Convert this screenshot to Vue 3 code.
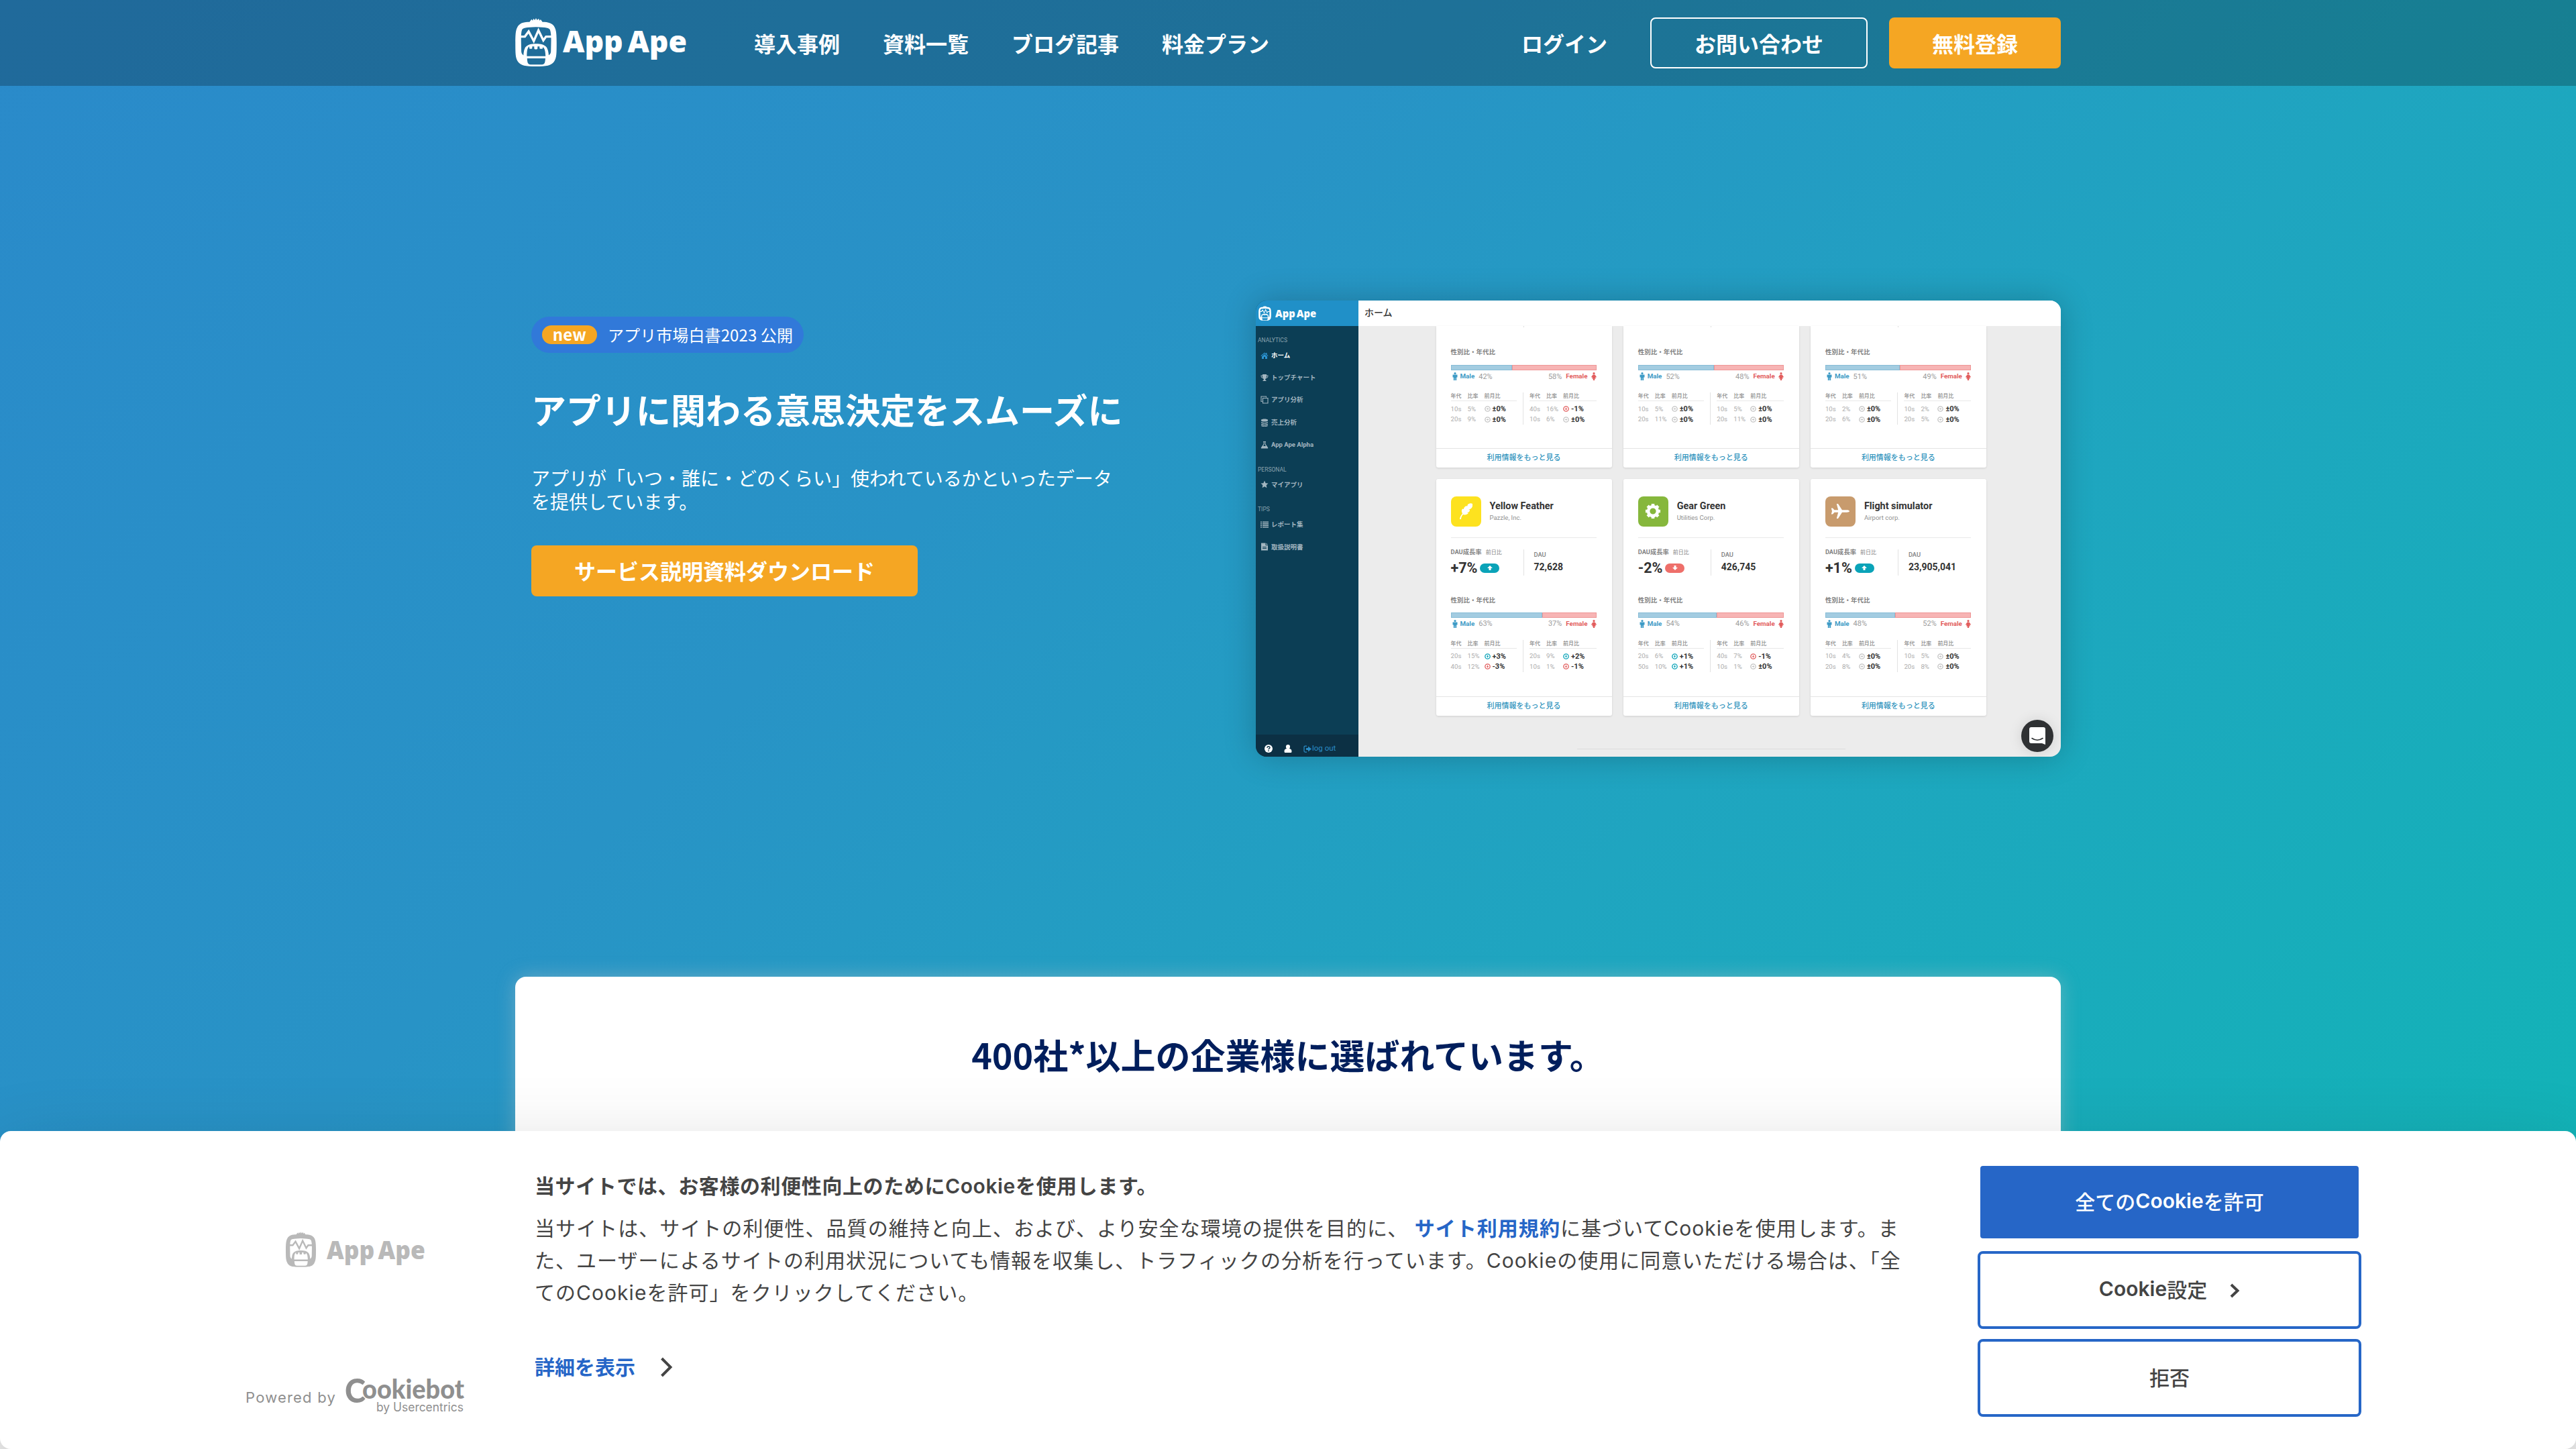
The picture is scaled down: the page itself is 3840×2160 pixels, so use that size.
<script setup>
const nav = ['導入事例', '資料一覧', 'ブログ記事', '料金プラン']

const menu = [
  {
    label: 'ANALYTICS',
    items: [
      { icon: 'home', text: 'ホーム', active: true },
      { icon: 'trophy', text: 'トップチャート' },
      { icon: 'copy', text: 'アプリ分析' },
      { icon: 'database', text: '売上分析' },
      { icon: 'flask', text: 'App Ape Alpha' },
    ],
  },
  { label: 'PERSONAL', items: [{ icon: 'star', text: 'マイアプリ' }] },
  {
    label: 'TIPS',
    items: [
      { icon: 'list', text: 'レポート集' },
      { icon: 'file', text: '取扱説明書' },
    ],
  },
]

const rows = [
  [
    { male: 42, ages: [[['10s', 5, 0], ['20s', 9, 0]], [['40s', 16, -1], ['10s', 6, 0]]] },
    { male: 52, ages: [[['10s', 5, 0], ['20s', 11, 0]], [['10s', 5, 0], ['20s', 11, 0]]] },
    { male: 51, ages: [[['10s', 2, 0], ['20s', 6, 0]], [['10s', 2, 0], ['20s', 5, 0]]] },
  ],
  [
    {
      app: { name: 'Yellow Feather', corp: 'Pazzle, Inc.', icon: 'feather', growth: 7, dau: '72,628' },
      male: 63,
      ages: [[['20s', 15, 3], ['40s', 12, -3]], [['20s', 9, 2], ['10s', 1, -1]]],
    },
    {
      app: { name: 'Gear Green', corp: 'Utilities Corp.', icon: 'gear', growth: -2, dau: '426,745' },
      male: 54,
      ages: [[['20s', 6, 1], ['50s', 10, 1]], [['40s', 7, -1], ['10s', 1, 0]]],
    },
    {
      app: { name: 'Flight simulator', corp: 'Airport corp.', icon: 'plane', growth: 1, dau: '23,905,041' },
      male: 48,
      ages: [[['10s', 4, 0], ['20s', 8, 0]], [['10s', 5, 0], ['20s', 8, 0]]],
    },
  ],
]

const signed = (n) => (n > 0 ? `+${n}%` : n < 0 ? `${n}%` : '±0%')
const trend = (n) => (n > 0 ? 'up' : n < 0 ? 'down' : 'flat')
</script>

<template>
  <div class="page">
    <svg class="defs" width="0" height="0" aria-hidden="true">
      <defs>
        <mask id="ape-mask" maskUnits="userSpaceOnUse" x="50" y="46" width="194" height="225">
          <path fill="#fff" d="M54 160C54 108 58 84 84 72C96 67 108 67 118 67L127 55L132 61L136 52L142 59L147 50L152 59L159 52L163 61L168 56L176 67C188 67 200 68 212 73C236 84 240 108 240 160C240 206 240 228 228 246C214 264 196 267 147 267C98 267 80 264 66 246C54 228 54 206 54 160Z" />
          <path fill="#000" d="M80 150C80 130 80 114 84 103C88 94 100 92 147 90C194 92 206 94 210 103C214 114 215 130 215 150L214 200C213 212 207 215 198 221H97C88 215 82 212 81 200Z" />
          <path fill="none" stroke="#fff" stroke-width="10" d="M76 133H97L114 110L137 153L158 105L180 150L192 133H218" />
          <path fill="#fff" d="M90 232C91 206 92 192 100 180C109 169 126 165 147 165C168 165 185 169 194 180C202 192 204 206 205 232L196 262H99Z" />
          <path fill="#000" d="M106 221C106 200 107 184 117 177V184Q117 188 121 188H126Q130 188 130 184V177H139V186Q139 190 143 190H150Q154 190 154 186V177H163V184Q163 188 167 188H174Q178 188 178 180C187 186 189 200 190 221Z" />
          <path fill="#000" d="M107 231H189C188 250 186 258 174 259H122C110 258 108 250 107 231Z" />
        </mask>
        <symbol id="ape" viewBox="54 50 186 217">
          <rect x="54" y="50" width="186" height="217" fill="currentColor" mask="url(#ape-mask)" />
        </symbol>
      </defs>
    </svg>

    <header class="header">
      <div class="container header-inner">
        <div class="brand">
          <svg class="brand-icon" width="62" height="72"><use href="#ape" /></svg>
          <svg class="brand-text" width="190" height="64" viewBox="0 0 190 64">
            <text x="0" y="43" font-size="45" textLength="185" lengthAdjust="spacingAndGlyphs" word-spacing="-5">App Ape</text>
          </svg>
        </div>
        <nav class="nav">
          <a v-for="n in nav" :key="n">{{ n }}</a>
        </nav>
        <div class="actions">
          <a>ログイン</a>
          <a class="btn outline">お問い合わせ</a>
          <a class="btn solid">無料登録</a>
        </div>
      </div>
    </header>

    <main>
      <section class="container hero">
        <div class="copy">
          <div class="news"><b>new</b><span>アプリ市場白書2023 公開</span></div>
          <h1>アプリに関わる意思決定をスムーズに</h1>
          <p>アプリが「いつ・誰に・どのくらい」使われているかといったデータ<br />を提供しています。</p>
          <a class="btn solid">サービス説明資料ダウンロード</a>
        </div>

        <div class="mock">
          <aside class="side">
            <div class="side-brand">
              <svg width="19" height="22"><use href="#ape" /></svg>
              <svg width="64" height="28" viewBox="0 0 64 28">
                <text x="0" y="19.500" font-size="16.5" textLength="61" lengthAdjust="spacingAndGlyphs" word-spacing="-2">App Ape</text>
              </svg>
            </div>
            <div v-for="g in menu" :key="g.label" class="group">
              <div class="group-label">{{ g.label }}</div>
              <div v-for="i in g.items" :key="i.text" class="item" :class="{ active: i.active }">
                <svg width="12" height="12" viewBox="0 0 24 24" fill="currentColor">
                  <path v-if="i.icon === 'home'" d="M12 3 1 12.5l1.500 1.700L12 6l9.500 8.200 1.500-1.700L19 9V4h-3v2.500zM12 8l-8 7v7h6v-6h4v6h6v-7z" />
                  <path v-else-if="i.icon === 'trophy'" d="M6 2h12v3h5c0 6-2 8-6.500 9-1 1.500-2.500 2-2.500 4 0 1 3.500 1.500 3.500 4h-11c0-2.500 3.500-3 3.500-4 0-2-1.500-2.500-2.500-4C3 13 1 11 1 5h5zM3 7c.3 3 1.500 4.500 3.800 5C6.200 10 6 9 6 7zm18 0h-3c0 2-.2 3-.8 5C19.500 11.500 20.700 10 21 7z" />
                  <path v-else-if="i.icon === 'copy'" fill="none" stroke="currentColor" stroke-width="2.200" d="M7 7h15v15H7zM5 17H2V2h15v3" />
                  <path v-else-if="i.icon === 'database'" d="M2 4c0-4 20-4 20 0v2c0 4-20 4-20 0zm0 6c4 3 16 3 20 0v2c0 4-20 4-20 0zm0 5.500c4 3 16 3 20 0v2c0 4-20 4-20 0zM2 20c4 3 16 3 20 0v1c0 4-20 4-20 0z" />
                  <path v-else-if="i.icon === 'flask'" d="M8 2h8v2h-1v6l7 10c1 2 0 3-1 3H3c-1 0-2-1-1-3l7-10V4H8zm3 2v7l-3 5h8l-3-5V4z" />
                  <path v-else-if="i.icon === 'star'" d="m12 1 3.300 7.300 7.700.9-5.700 5.400 1.500 8L12 18.700 5.200 22.600l1.500-8L1 9.200l7.700-.9z" />
                  <path v-else-if="i.icon === 'list'" d="M0 3h4v3H0zm6 0h18v3H6zM0 8h4v3H0zm6 0h18v3H6zm-6 5h4v3H0zm6 0h18v3H6zm-6 5h4v3H0zm6 0h18v3H6z" />
                  <path v-else fill-rule="evenodd" d="M2 1h13v7h7v15H2zm15 0 5 5h-5zM6 12v2h12v-2zm0 4v2h12v-2z" />
                </svg>
                <span>{{ i.text }}</span>
              </div>
            </div>
            <div class="side-foot">
              <svg width="12" height="12" viewBox="0 0 24 24">
                <circle cx="12" cy="12" r="12" fill="#fff" />
                <path d="M8 9.500c0-5 8-5 8-.5 0 3-4 2.800-4 5.500M12 17v3" fill="none" stroke="#0c3044" stroke-width="3" />
              </svg>
              <svg width="12" height="12" viewBox="0 0 24 24" fill="#fff">
                <path d="M12 0c8 0 7 9 4 12 5 1 7 3 7 8 0 3-1 4-3 4H4c-2 0-3-1-3-4 0-5 2-7 7-8C5 9 4 0 12 0z" />
              </svg>
              <span class="logout">
                <svg width="12" height="11" viewBox="0 0 24 22">
                  <path d="M10 2H5Q2 2 2 5v12q0 3 3 3h5" fill="none" stroke="currentColor" stroke-width="2.500" />
                  <path d="M8 8h6V3l10 8-10 8v-5H8z" fill="currentColor" />
                </svg>log out
              </span>
            </div>
          </aside>

          <div class="board">
            <div class="board-head">ホーム</div>
            <div class="board-body">
              <div v-for="(row, r) in rows" :key="r" class="cards">
                <article v-for="(c, k) in row" :key="k" class="card" :class="{ cut: !c.app }">
                  <template v-if="c.app">
                    <div class="card-head">
                      <div class="tile" :class="c.app.icon">
                        <svg v-if="c.app.icon === 'feather'" width="28" height="28" viewBox="0 0 28 28">
                          <path fill="#fff" d="M24 3c-3-2-6 0-7 1l-1 3-1-1c-3 1-4 3-4 5l-2-.5c-2 3-1 5 0 7C7 20 5 23 5 26h2c0-3 1-5 3-7 3 1 6 0 8-2l-2-1c3 0 4-2 4-4h-2c3-1 6-3 6-6z" />
                        </svg>
                        <svg v-else-if="c.app.icon === 'gear'" width="24" height="24" viewBox="0 0 26 26">
                          <path fill="none" stroke="#fff" stroke-width="5" d="M13 5.500a7.500 7.500 0 1 0 0 15 7.500 7.500 0 1 0 0-15z" />
                          <path fill="none" stroke="#fff" stroke-width="5" d="M13 1v3M13 22v3M1 13h3M22 13h3M4.500 4.500l2.200 2.200M19.300 19.300l2.200 2.200M4.500 21.500l2.200-2.200M19.300 6.700l2.200-2.200" />
                        </svg>
                        <svg v-else width="28" height="26" viewBox="0 0 28 26">
                          <path fill="#fff" d="M28 13c0 1.200-2 1.700-4 1.700h-7L11 24H8.800l2.400-9.300H5.500L3 17.500H.8L2 13 .8 8.500H3l2.500 2.800h5.700L8.800 2H11l6 9.300h7c2 0 4 .5 4 1.700z" />
                        </svg>
                      </div>
                      <div class="app-text">
                        <div class="app-name">{{ c.app.name }}</div>
                        <div class="app-corp">{{ c.app.corp }}</div>
                      </div>
                    </div>
                    <div class="stats">
                      <div class="growth">
                        <div class="stat-label">DAU成長率<small>前日比</small></div>
                        <div class="growth-value">
                          {{ signed(c.app.growth) }}
                          <i :class="trend(c.app.growth)">
                            <svg width="8" height="7" viewBox="0 0 9 8"><path fill="#fff" d="M4.500 0 9 4.500H6.200V8H2.800V4.500H0z" /></svg>
                          </i>
                        </div>
                      </div>
                      <div class="dau">
                        <div class="stat-label">DAU</div>
                        <div class="dau-value">{{ c.app.dau }}</div>
                      </div>
                    </div>
                  </template>
                  <div v-else class="stub"></div>

                  <div class="ratio-title">性別比・年代比</div>
                  <div class="bar">
                    <div class="bar-m" :style="{ width: c.male + '%' }"></div>
                    <div class="bar-f"></div>
                  </div>
                  <div class="sexes">
                    <svg class="m" width="8" height="12" viewBox="0 0 8 12" fill="currentColor"><circle cx="4" cy="1.600" r="1.600" /><path d="M.5 3.500h7v4H6.200V12H4.300V8.500h-.6V12H1.800V7.500H.5z" /></svg>
                    <b class="m">Male</b><span>{{ c.male }}%</span>
                    <span class="push">{{ 100 - c.male }}%</span><b class="f">Female</b>
                    <svg class="f" width="8" height="12" viewBox="0 0 8 12" fill="currentColor"><circle cx="4" cy="1.600" r="1.600" /><path d="M2.500 3.500h3L8 7 7 7.800 6 7l.8 2.500H5.200V12H2.800V9.500H1.200L2 7l-1 .8L0 7z" /></svg>
                  </div>
                  <div class="ages">
                    <div v-for="(t, ti) in c.ages" :key="ti" class="age">
                      <div class="age-row age-head"><span>年代</span><span>比率</span><span>前月比</span></div>
                      <div v-for="(a, ai) in t" :key="ai" class="age-row">
                        <span>{{ a[0] }}</span><span>{{ a[1] }}%</span>
                        <span class="delta">
                          <svg :class="trend(a[2])" width="9" height="9" viewBox="0 0 9 9">
                            <circle cx="4.500" cy="4.500" r="3.700" fill="none" stroke="currentColor" stroke-width="1.300" />
                            <path v-if="a[2] > 0" d="M4.500 2.500 6.300 4.700H5V6.300H4V4.700H2.700z" fill="currentColor" />
                            <path v-else-if="a[2] < 0" d="M4.500 6.500 6.300 4.300H5V2.700H4V4.300H2.700z" fill="currentColor" />
                            <path v-else d="M6.500 4.500 4.300 6.300V5H2.700V4h1.600V2.700z" fill="currentColor" />
                          </svg>
                          <b>{{ signed(a[2]) }}</b>
                        </span>
                      </div>
                    </div>
                  </div>
                  <div class="more">利用情報をもっと見る</div>
                </article>
              </div>
              <div class="rule"></div>
            </div>
            <div class="chat">
              <svg width="24" height="26" viewBox="0 0 24 26">
                <path fill="#fff" d="M3 0h18q3 0 3 3v23l-5-2H3q-3 0-3-3V3q0-3 3-3z" />
                <path d="M4 16.500q8 5.500 16 0" fill="none" stroke="#2f3133" stroke-width="1.600" stroke-linecap="round" />
              </svg>
            </div>
          </div>
        </div>
      </section>

      <section class="container clients">
        <h2>400社*以上の企業様に選ばれています。</h2>
      </section>
    </main>

    <div class="consent">
      <div class="consent-brand">
        <div class="consent-logo">
          <svg width="45" height="53"><use href="#ape" /></svg>
          <svg width="150" height="56" viewBox="0 0 150 56">
            <text x="0" y="42" font-size="36.500" textLength="147" lengthAdjust="spacingAndGlyphs" word-spacing="-4">App Ape</text>
          </svg>
        </div>
        <div class="powered">
          <span>Powered by</span>
          <svg width="178" height="56" viewBox="0 0 178 56">
            <text class="cb" x="-2" y="36" font-size="49" textLength="31" lengthAdjust="spacingAndGlyphs">C</text>
            <text class="cb" x="24" y="30" font-size="40" textLength="152" lengthAdjust="spacingAndGlyphs">ookiebot</text>
            <text class="by" x="45" y="49" font-size="18" textLength="130" lengthAdjust="spacingAndGlyphs">by Usercentrics</text>
          </svg>
        </div>
      </div>
      <div class="consent-text">
        <h3>当サイトでは、お客様の利便性向上のために<b>Cookie</b>を使用します。</h3>
        <p>
          当サイトは、サイトの利便性、品質の維持と向上、および、より安全な環境の提供を目的に、 <a>サイト利用規約</a>に基づいてCookieを使用します。ま<br />た、ユーザーによるサイトの利用状況についても情報を収集し、トラフィックの分析を行っています。Cookieの使用に同意いただける場合は、「全<br />てのCookieを許可」をクリックしてください。
        </p>
        <div class="details">
          <a>詳細を表示</a>
          <svg width="20" height="30" viewBox="0 0 20 30"><path d="M2.500 2 15.500 15 2.500 28" fill="none" stroke="#444" stroke-width="4" /></svg>
        </div>
      </div>
      <div class="consent-actions">
        <button class="primary">全ての<b>Cookie</b>を許可</button>
        <button><b>Cookie</b>設定
          <svg width="15" height="22" viewBox="0 0 15 22"><path d="M2 2 11.500 11 2 20" fill="none" stroke="#444" stroke-width="4" /></svg>
        </button>
        <button>拒否</button>
      </div>
    </div>
  </div>
</template>

<style>
html,
body {
  margin: 0;
  overflow: hidden;
}
</style>

<style scoped>
.page {
  position: relative;
  width: 3840px;
  height: 2160px;
  overflow: hidden;
  background: linear-gradient(135deg, #2a8aca 0%, #2893c6 36%, #1fa5c0 62%, #11b5b6 98%) 0 0 / 100% 2110px no-repeat #fff;
  font-family: "Noto Sans CJK JP", sans-serif;
  color: #fff;
}
.page * {
  box-sizing: border-box;
}
.defs {
  position: absolute;
}
.container {
  width: 2304px;
  margin: 0 auto;
}

/* header */
.header {
  height: 128px;
  background: rgba(0, 0, 0, 0.23);
}
.header-inner {
  height: 128px;
  display: flex;
  align-items: center;
  font-size: 32px;
  font-weight: 700;
}
.brand {
  width: 356px;
  display: flex;
  align-items: center;
  gap: 9px;
}
.brand-icon {
  margin-top: -3px;
}
.brand-text {
  margin-top: 5px;
}
.brand-text,
.side-brand svg,
.consent-logo svg {
  overflow: visible;
}
.brand text,
.side-brand text,
.consent-logo text {
  font-family: "Noto Sans", sans-serif;
  font-weight: 900;
  fill: currentColor;
}
.nav {
  display: flex;
  gap: 64px;
}
.actions {
  margin-left: auto;
  display: flex;
  align-items: center;
}
.actions > a:first-child {
  margin-right: 64px;
}
.actions .outline {
  margin-right: 32px;
}
.btn {
  display: inline-flex;
  align-items: center;
  justify-content: center;
  height: 76px;
  padding: 0 64px;
  border-radius: 8px;
  font-size: 32px;
  font-weight: 700;
  line-height: 1;
}
.btn.outline {
  border: 2px solid #fff;
}
.btn.solid {
  background: #f5a623;
}
.copy .btn {
  padding-bottom: 2px;
}

/* hero */
.hero {
  display: flex;
  justify-content: space-between;
  height: 1328px;
  padding-top: 320px;
}
.copy {
  width: 900px;
  padding: 24px 0 0 24px;
}
.news {
  display: flex;
  align-items: center;
  width: 406px;
  height: 54px;
  padding: 0 16px;
  border-radius: 27px;
  background: #3179d9;
  font-size: 24px;
  line-height: 1;
  letter-spacing: 0.1px;
  white-space: nowrap;
}
.news b {
  display: flex;
  align-items: center;
  justify-content: center;
  width: 82px;
  height: 28px;
  padding-bottom: 3px;
  margin-right: 16px;
  border-radius: 14px;
  background: #f5a623;
}
h1 {
  margin: 48px 0 0;
  font-size: 52px;
  line-height: 72px;
  font-weight: 700;
  white-space: nowrap;
}
.copy p {
  margin: 49px 0 48px;
  font-size: 28px;
  line-height: 35px;
  white-space: nowrap;
}

/* dashboard */
.mock {
  display: flex;
  width: 1200px;
  height: 680px;
  border-radius: 16px;
  overflow: hidden;
  box-shadow: 0 0 48px rgba(0, 0, 0, 0.22);
  font-family: Roboto, "Noto Sans CJK JP", sans-serif;
  color: #333;
  line-height: 1;
  white-space: nowrap;
}
.side {
  display: flex;
  flex-direction: column;
  width: 153px;
  background: #0c3e55;
  color: #a3b6c0;
}
.side-brand {
  display: flex;
  align-items: center;
  gap: 6px;
  height: 38px;
  padding-left: 4px;
  margin-bottom: 15px;
  background: #2090c8;
  color: #fff;
}
.group {
  margin-bottom: 14.300px;
}
.group-label {
  height: 12px;
  padding-left: 3px;
  font-size: 8.500px;
  line-height: 12px;
  color: #8ba3b0;
}
.item {
  display: flex;
  align-items: center;
  gap: 4px;
  height: 33.300px;
  padding-left: 7px;
  font-size: 9.500px;
  font-weight: 700;
}
.active {
  color: #fff;
}
.active svg {
  color: #2b93d1;
}
.side-foot {
  display: flex;
  align-items: center;
  height: 33px;
  margin-top: auto;
  padding: 9px 0 0 13px;
  gap: 17px;
  background: #0c3044;
}
.logout {
  display: flex;
  align-items: center;
  gap: 1px;
  color: #2a8cc6;
  font-size: 11.500px;
}
.board {
  position: relative;
  flex: 1;
  background: #ececec;
}
.board-head {
  height: 38px;
  padding-left: 9px;
  background: #fff;
  font-size: 14px;
  line-height: 37px;
  font-weight: 500;
}
.board-body {
  padding-left: 115.500px;
}
.cards {
  display: flex;
  gap: 17.200px;
  margin-bottom: 17px;
}
.card {
  display: flex;
  flex-direction: column;
  width: 262px;
  height: 353px;
  border-radius: 3px;
  background: #fff;
  box-shadow: 0 1px 3px rgba(0, 0, 0, 0.12);
}
.card.cut {
  height: 210.500px;
  border-radius: 0 0 3px 3px;
}
.card > * {
  margin-left: 22px;
  margin-right: 23px;
}
.card-head {
  display: flex;
  height: 88px;
  padding-top: 26px;
  border-bottom: 1px solid #e8e8e8;
}
.tile {
  display: flex;
  align-items: center;
  justify-content: center;
  width: 45px;
  height: 45px;
  border-radius: 8px;
}
.tile.feather {
  background: #fde21f;
}
.tile.gear {
  background: #86b73c;
}
.tile.plane {
  background: #c89b6d;
}
.app-text {
  padding: 6px 0 0 13px;
}
.app-name {
  font-size: 14.400px;
  line-height: 17px;
  font-weight: 700;
}
.app-corp {
  margin-top: 2px;
  font-size: 9.500px;
  line-height: 14px;
  color: #8f8f8f;
}
.stats {
  display: flex;
  height: 39px;
  margin-top: 17px;
}
.growth {
  width: 109px;
  border-right: 1px solid #e2e2e2;
}
.stat-label {
  height: 8px;
  font-size: 9.300px;
  line-height: 8px;
  font-weight: 700;
  color: #828282;
}
.stat-label small {
  margin-left: 6px;
  font-size: 8px;
  font-weight: 400;
}
.growth-value {
  display: flex;
  align-items: center;
  gap: 4px;
  height: 22px;
  margin-top: 9px;
  font-size: 21.500px;
  font-weight: 700;
}
.growth-value i {
  display: flex;
  align-items: center;
  justify-content: center;
  width: 29px;
  height: 14px;
  border-radius: 7px;
  background: #0aa3b8;
}
.growth-value i.down {
  background: #ee6f6a;
}
.growth-value i.down svg {
  transform: rotate(180deg);
}
.dau {
  padding: 4px 0 0 15px;
}
.dau .stat-label {
  font-weight: 500;
}
.dau-value {
  margin-top: 6px;
  font-size: 14px;
  line-height: 16px;
  font-weight: 700;
}
.card > .stub {
  width: 1px;
  height: 2px;
  margin-left: 130.500px;
  background: #ddd;
}
.ratio-title {
  margin-top: 31px;
  font-size: 9.500px;
  line-height: 12px;
  font-weight: 700;
  color: #808080;
}
.bar {
  display: flex;
  height: 8px;
  margin-top: 12px;
}
.bar-m {
  background: #a3cce1;
  border: 1px solid #86bcd6;
}
.bar-f {
  flex: 1;
  background: #f7b4b4;
  border: 1px solid #ee9696;
}
.sexes {
  display: flex;
  align-items: center;
  height: 12px;
  margin-top: 3px;
  padding-left: 2px;
  font-size: 11px;
  color: #9c9c9c;
}
.cut .bar {
  margin-top: 13px;
}
.sexes b {
  font-size: 9.800px;
}
.sexes b.m {
  margin: 0 6px 0 4px;
}
.sexes b.f {
  margin: 0 5px 0 6px;
}
.push {
  margin-left: auto;
}
.m {
  color: #3e9bc6;
}
.f {
  color: #e25d5d;
}
.ages {
  display: flex;
  height: 48px;
  margin-top: 18px;
}
.age {
  width: 100px;
}
.age:first-child {
  width: 109px;
  padding-right: 9px;
  margin-right: 9px;
  border-right: 1px solid #e2e2e2;
}
.age-row {
  display: grid;
  grid-template-columns: 25px 25px 1fr;
  align-items: center;
  height: 15.500px;
  font-size: 9.700px;
  color: #adadad;
}
.age-row.age-head {
  height: 13px;
  margin-bottom: 4px;
  border-bottom: 1px solid #e8e8e8;
  font-size: 8px;
  font-weight: 500;
  color: #8c8c8c;
}
.delta {
  display: flex;
  align-items: center;
  gap: 3px;
}
.delta b {
  font-size: 11px;
  color: #333;
}
.delta .up {
  color: #0aa3b8;
}
.delta .down {
  color: #e25d5d;
}
.delta .flat {
  color: #c4c4c4;
}
.card > .more {
  height: 29px;
  margin: auto 0 0;
  border-top: 1px solid #e4e4e4;
  text-align: center;
  font-size: 11px;
  line-height: 28px;
  font-weight: 500;
  color: #2f93bd;
}
.rule {
  width: 400px;
  height: 1px;
  margin: 49px 0 0 210px;
  background: #dcdcdc;
}
.chat {
  position: absolute;
  right: 11px;
  bottom: 7px;
  display: flex;
  align-items: center;
  justify-content: center;
  width: 48px;
  height: 48px;
  border-radius: 50%;
  background: #2f3133;
  box-shadow: 0 1px 20px rgba(0, 0, 0, 0.12);
}

/* clients */
.clients {
  height: 800px;
  border-radius: 16px;
  background: #fff;
  box-shadow: 0 0 28px rgba(200, 200, 200, 0.4);
  padding-top: 80px;
}
h2 {
  margin: 0;
  text-align: center;
  font-size: 52px;
  line-height: 72px;
  font-weight: 700;
  color: #001e5c;
}

/* cookie consent */
.consent {
  position: absolute;
  left: 0;
  bottom: 0;
  display: flex;
  width: 3840px;
  height: 474px;
  border-radius: 16px;
  background: #fff;
  box-shadow: 0 64px 136px rgba(0, 0, 0, 0.3);
  font-family: Inter, "Noto Sans CJK JP", sans-serif;
  font-size: 30px;
  color: #444;
}
.consent b {
  font-weight: 600;
}
.consent a {
  color: #2666c7;
  font-weight: 700;
}
.consent-brand {
  width: 797px;
}
.consent-logo {
  display: flex;
  align-items: center;
  gap: 16px;
  height: 53px;
  margin: 150px 0 0 426px;
  color: #b9b9b9;
}
.powered {
  display: flex;
  align-items: flex-start;
  margin: 166px 0 0 366px;
  color: #8f8f8f;
}
.powered span {
  width: 150px;
  padding-top: 15px;
  font-size: 22px;
  line-height: 26px;
  letter-spacing: 1.200px;
  white-space: nowrap;
}
.powered svg {
  overflow: visible;
}
.powered text {
  fill: currentColor;
}
.cb {
  font-family: Lato, sans-serif;
  font-weight: 900;
}
.by {
  font-family: Inter, sans-serif;
}
.consent-text {
  width: 2151px;
  padding-top: 58px;
  white-space: nowrap;
}
h3 {
  margin: 0;
  font-size: 30px;
  line-height: 48px;
  font-weight: 700;
  letter-spacing: 0.600px;
}
.consent-text p {
  margin: 15px 0 0;
  line-height: 48px;
  letter-spacing: 1.040px;
}
.details {
  display: flex;
  align-items: center;
  gap: 37px;
  margin-top: 63px;
  line-height: 48px;
}
.consent-actions {
  display: flex;
  flex-direction: column;
  gap: 15px;
  padding-top: 48px;
}
.consent-actions button {
  display: flex;
  align-items: center;
  justify-content: center;
  width: 572px;
  height: 116px;
  padding: 0 0 4px;
  border: 4px solid #2666c7;
  border-radius: 8px;
  background: #fff;
  font: 500 30px Inter, "Noto Sans CJK JP", sans-serif;
  color: #444;
}
.consent-actions button svg {
  margin: 5px 0 0 34px;
}
.consent-actions button.primary {
  border-color: transparent;
  background: #2666c7;
  background-clip: padding-box;
  color: #fff;
}
</style>
